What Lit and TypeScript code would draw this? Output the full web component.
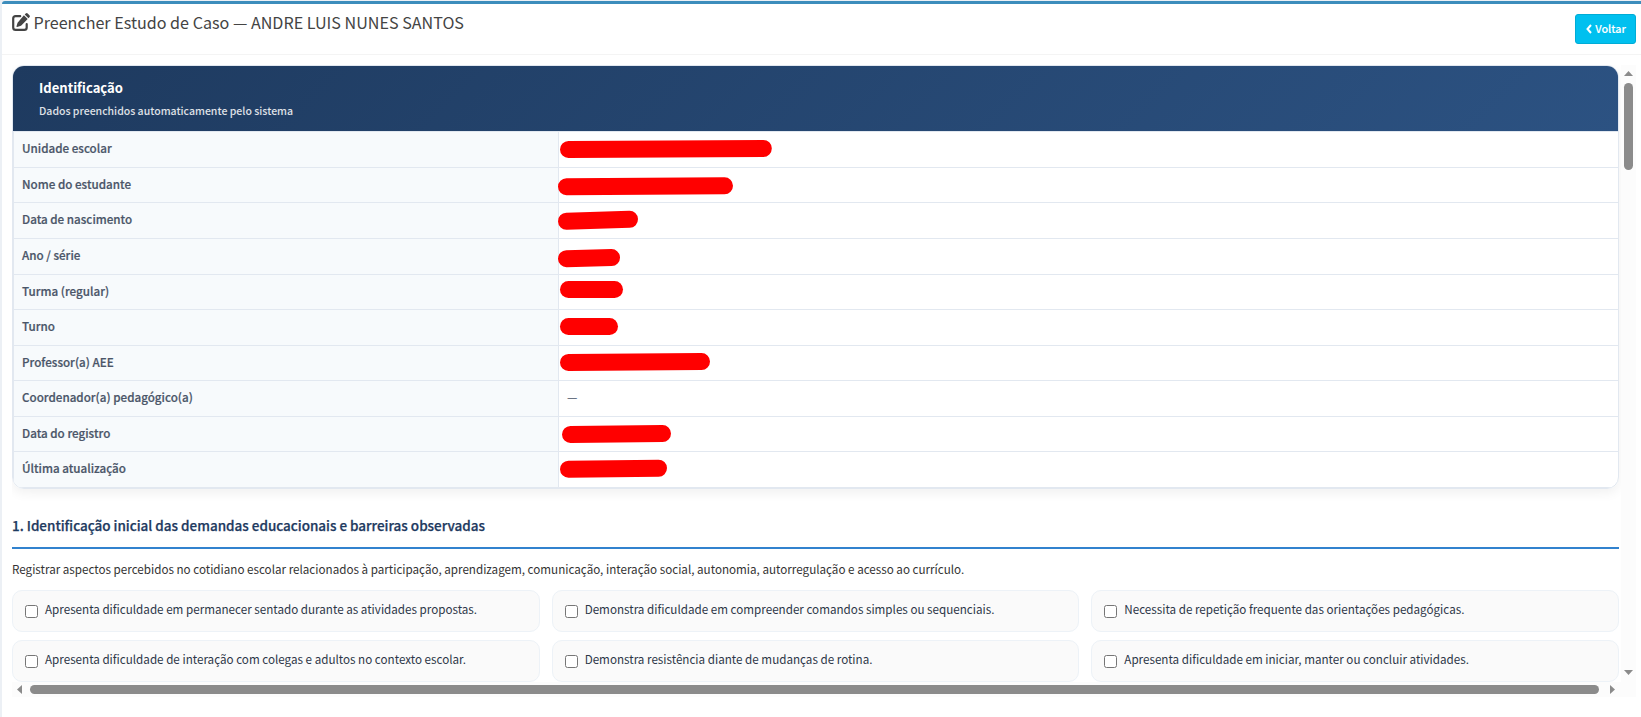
import { html, css, svg, LitElement, TemplateResult, nothing } from 'lit';
import { customElement, property } from 'lit/decorators.js';

// start and end of a marker stroke, relative to the value cell
type Stroke = [number, number, number, number];

interface FieldInterface {
  label: string;
  value?: string;
  stroke?: Stroke;
}

const fields: FieldInterface[] = [
  { label: 'Unidade escolar', stroke: [9.5, 17.4, 204.3, 16.4] },
  { label: 'Nome do estudante', stroke: [7.5, 18.8, 165.5, 17.7] },
  { label: 'Data de nascimento', stroke: [7.5, 18.2, 70.5, 16.3] },
  { label: 'Ano / série', stroke: [7.5, 19.7, 52.5, 18.6] },
  { label: 'Turma (regular)', stroke: [9.5, 14.5, 55.5, 14.5] },
  { label: 'Turno', stroke: [9.5, 16.5, 50.5, 16.5] },
  { label: 'Professor(a) AEE', stroke: [9.5, 16.5, 142.5, 15.5] },
  { label: 'Coordenador(a) pedagógico(a)', value: '—' },
  { label: 'Data do registro', stroke: [11.5, 17.4, 103.5, 16.5] },
  { label: 'Última atualização', stroke: [9.5, 17.2, 99.5, 16.2] },
];

const demands: string[] = [
  'Apresenta dificuldade em permanecer sentado durante as atividades propostas.',
  'Demonstra dificuldade em compreender comandos simples ou sequenciais.',
  'Necessita de repetição frequente das orientações pedagógicas.',
  'Apresenta dificuldade de interação com colegas e adultos no contexto escolar.',
  'Demonstra resistência diante de mudanças de rotina.',
  'Apresenta dificuldade em iniciar, manter ou concluir atividades.',
];

@customElement('scroll-track')
export class ScrollTrack extends LitElement {
  @property({ type: Boolean, reflect: true }) horizontal = false;

  renderArrow(points: string): TemplateResult {
    return html`<svg class="arrow" viewBox="0 0 15 15">
      <polygon points=${points} />
    </svg>`;
  }

  render() {
    return html`
      ${this.renderArrow(this.horizontal ? '10,3 10,12 5,7.5' : '3,11 12,11 7.5,6')}
      <div class="lane"><div class="thumb"></div></div>
      ${this.renderArrow(this.horizontal ? '4,3 4,12 9,7.5' : '3,3 12,3 7.5,8')}
    `;
  }

  static styles = css`
    :host {
      display: flex;
      flex-direction: column;
      background: #fcfcfc;
    }

    :host([horizontal]) {
      flex-direction: row;
    }

    .arrow {
      width: 15px;
      height: 15px;
      flex: none;
      fill: #8b8b8b;
    }

    .lane {
      flex: 1;
      padding: 3px;
    }

    .thumb {
      width: 9px;
      height: 87px;
      border-radius: 5px;
      background: #8b8b8b;
    }

    :host([horizontal]) .lane {
      padding-right: 7px;
    }

    :host([horizontal]) .thumb {
      width: auto;
      height: 9px;
    }
  `;
}

@customElement('app-root')
export class AppRoot extends LitElement {
  renderStroke([x1, y1, x2, y2]: Stroke): TemplateResult {
    return html`<svg class="stroke" width="240" height="34">
      ${svg`<line x1=${x1} y1=${y1} x2=${x2} y2=${y2} />`}
    </svg>`;
  }

  renderField(field: FieldInterface): TemplateResult {
    return html`<div class="row">
      <div class="label">${field.label}</div>
      <div class="value">
        ${field.stroke ? this.renderStroke(field.stroke) : nothing}
        ${field.value ? html`<span class="text">${field.value}</span>` : nothing}
      </div>
    </div>`;
  }

  renderDemand(text: string): TemplateResult {
    return html`<label class="option">
      <input type="checkbox" />
      <span>${text}</span>
    </label>`;
  }

  render() {
    return html`
      <div class="box">
        <header class="box-header">
          <h3 class="title">
            <svg class="edit" viewBox="0 0 18 18">
              <path
                class="frame"
                d="M8.200 3.200H3.600Q1.200 3.200 1.200 5.600v8.800q0 2.400 2.400 2.400h8.700q2.400 0 2.400-2.400v-3.200"
              />
              <path
                d="M11.900 2.300l3.800 3.800-6.400 6.400q-.4.400-1 .6l-3.200.9q-.8.100-.6-.7l.9-3.100q.1-.6.600-1zM12.700 1.500l1-.9q1-1 2 0l1.700 1.700q1 1 0 2l-.9 1z"
              />
            </svg>
            <span>Preencher Estudo de Caso — ANDRE LUIS NUNES SANTOS</span>
          </h3>
          <button class="back">
            <svg class="chevron" viewBox="0 0 6 10">
              <path d="M5 1L1.500 5 5 9" />
            </svg>
            <span>Voltar</span>
          </button>
        </header>

        <div class="viewport">
          <div class="content">
            <section class="card">
              <div class="card-header">
                <div class="card-title">Identificação</div>
                <div class="card-subtitle">
                  Dados preenchidos automaticamente pelo sistema
                </div>
              </div>
              <div class="table">${fields.map(f => this.renderField(f))}</div>
            </section>

            <h4 class="section-title">
              1. Identificação inicial das demandas educacionais e barreiras
              observadas
            </h4>
            <p class="hint">
              Registrar aspectos percebidos no cotidiano escolar relacionados à
              participação, aprendizagem, comunicação, interação social,
              autonomia, autorregulação e acesso ao currículo.
            </p>
            <div class="options">${demands.map(d => this.renderDemand(d))}</div>
          </div>
          <scroll-track></scroll-track>
          <scroll-track horizontal></scroll-track>
          <div class="corner"></div>
        </div>
      </div>
    `;
  }

  static styles = css`
    :host {
      display: block;
      box-sizing: border-box;
      height: 717px;
      padding: 1px 0 0 2px;
      overflow: hidden;
      background: #ecf0f5;
      color: #333;
      font-family: 'Source Sans Pro', 'Noto Sans CJK SC', sans-serif;
      font-size: 11.65px;
    }

    * {
      box-sizing: border-box;
    }

    .box {
      height: 716px;
      border-top: 3px solid #3c8dbc;
      border-top-left-radius: 3px;
      background: #fff;
    }

    .box-header {
      display: flex;
      justify-content: space-between;
      align-items: flex-start;
      height: 51px;
      padding: 10px 5px 0 10px;
      border-bottom: 1px solid #f4f4f4;
    }

    .title {
      display: flex;
      align-items: flex-start;
      gap: 3.5px;
      height: 18px;
      margin: -1px 0 0;
      color: #444;
      font-size: 16.13px;
      font-weight: 400;
      line-height: 18px;
      white-space: nowrap;
    }

    .edit {
      width: 18px;
      height: 18px;
      fill: #444;
    }

    .frame {
      fill: none;
      stroke: #444;
      stroke-width: 2.2;
      stroke-linecap: round;
    }

    .back {
      display: flex;
      align-items: center;
      justify-content: center;
      gap: 3px;
      width: 61px;
      height: 30px;
      padding: 0 0 0 1px;
      border: 1px solid #00acd6;
      border-radius: 3px;
      background: #00c0ef;
      color: #fff;
      font-family: inherit;
      font-size: 10.75px;
      font-weight: 500;
      line-height: 18px;
      -webkit-text-stroke: 0.1px;
    }

    .chevron {
      width: 6px;
      height: 10px;
      fill: none;
      stroke: #fff;
      stroke-width: 2;
    }

    .viewport {
      display: grid;
      grid-template-columns: 1609px 15px;
      grid-template-rows: 617px 15px;
      margin: 10px 0 0 10px;
    }

    .content {
      overflow: hidden;
      padding-right: 2px;
    }

    .corner {
      background: #fcfcfc;
    }

    .card {
      border: 1px solid #e2e8f0;
      border-radius: 12px;
      overflow: hidden;
      box-shadow: 0 4px 12px rgba(0, 0, 0, 0.06);
    }

    .card-header {
      height: 65.3px;
      padding: 12px 26px 0;
      background: linear-gradient(135deg, #1e3a5f 0%, #2c5282 100%);
      color: #fff;
    }

    .card-title {
      font-size: 13.05px;
      font-weight: 700;
      line-height: 20px;
    }

    .card-subtitle {
      margin-top: 4px;
      font-size: 10.52px;
      font-weight: 500;
      line-height: 18px;
      opacity: 0.85;
    }

    .table {
      border: 1px solid #e2e8f0;
      border-right: none;
    }

    .row {
      display: grid;
      grid-template-columns: 545px 1fr;
      height: 35.571px;
      border-bottom: 1px solid #e2e8f0;
    }

    .row:last-child {
      border-bottom: none;
      height: 34.7px;
    }

    .label {
      padding: 7px 8px 0;
      border-right: 1px solid #e2e8f0;
      background: #f7fafc;
      color: #4a5568;
      font-weight: 500;
      line-height: 18px;
      -webkit-text-stroke: 0.2px;
    }

    .value {
      color: #4a5568;
      line-height: 18px;
    }

    .text {
      display: block;
      padding: 7px 8px 0;
    }

    .stroke {
      display: block;
      overflow: visible;
      stroke: #f00;
      stroke-width: 17;
      stroke-linecap: round;
    }

    .section-title {
      height: 38px;
      margin: 22px 0 0;
      padding-top: 4px;
      border-bottom: 2px solid #3182ce;
      color: #1e3a5f;
      font-size: 13.48px;
      font-weight: 500;
      line-height: 20px;
      white-space: nowrap;
      -webkit-text-stroke: 0.25px;
    }

    .hint {
      height: 41px;
      margin: 0;
      padding-top: 11px;
      line-height: 18px;
      white-space: nowrap;
    }

    .options {
      display: grid;
      grid-template-columns: repeat(3, 1fr);
      gap: 8px 12px;
    }

    .option {
      display: flex;
      align-items: flex-start;
      gap: 7px;
      height: 42px;
      padding: 9px 12px 0;
      border: 1px solid #edf2f7;
      border-radius: 10px;
      background: #fafafa;
      color: #2d3748;
      line-height: 18px;
      white-space: nowrap;
    }

    .option input {
      width: 13px;
      height: 13px;
      margin: 5px 0 0;
    }
  `;
}
